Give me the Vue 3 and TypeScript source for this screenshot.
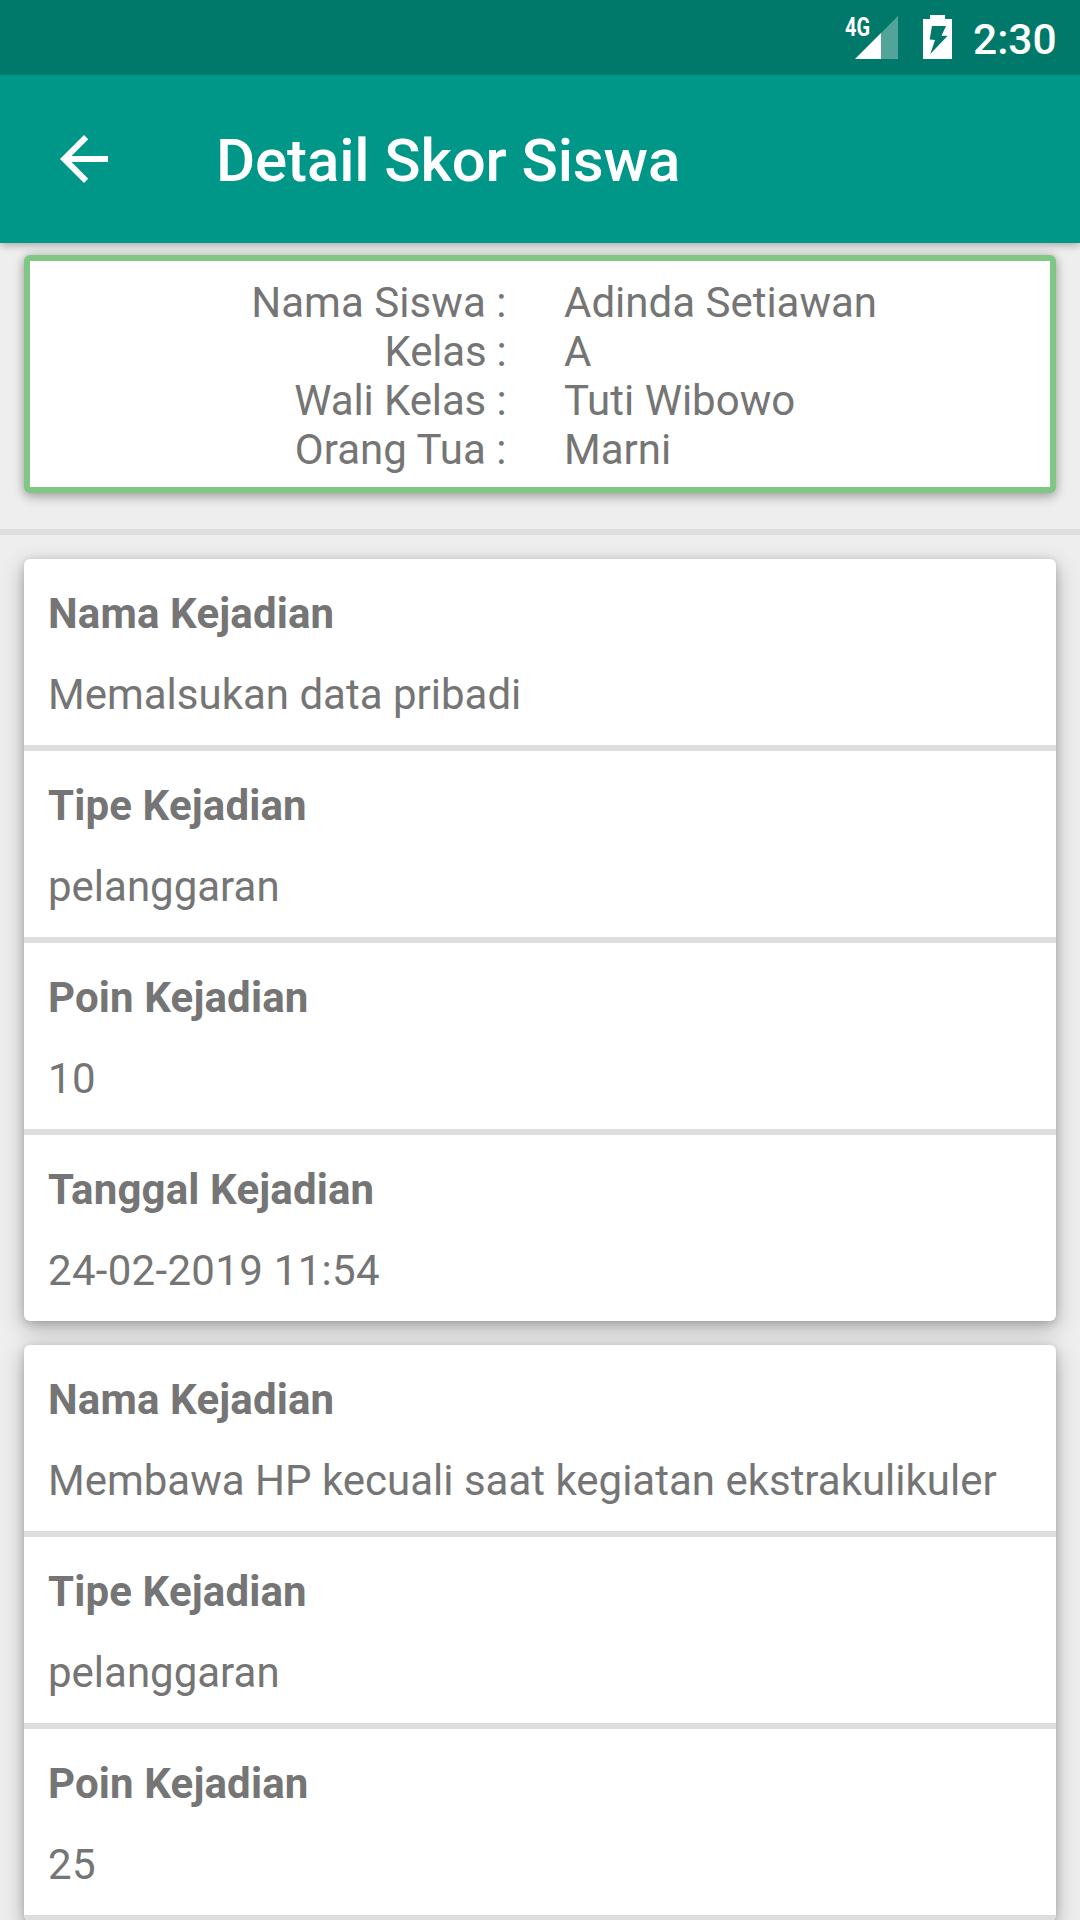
<script setup lang="ts">
interface Field {
  label: string
  value: string
  numeric?: boolean
}

const student: Field[] = [
  { label: 'Nama Siswa :', value: 'Adinda Setiawan' },
  { label: 'Kelas :', value: 'A' },
  { label: 'Wali Kelas :', value: 'Tuti Wibowo' },
  { label: 'Orang Tua :', value: 'Marni' },
]

const incidents: Field[][] = [
  [
    { label: 'Nama Kejadian', value: 'Memalsukan data pribadi' },
    { label: 'Tipe Kejadian', value: 'pelanggaran' },
    { label: 'Poin Kejadian', value: '10', numeric: true },
    { label: 'Tanggal Kejadian', value: '24-02-2019 11:54', numeric: true },
  ],
  [
    { label: 'Nama Kejadian', value: 'Membawa HP kecuali saat kegiatan ekstrakulikuler' },
    { label: 'Tipe Kejadian', value: 'pelanggaran' },
    { label: 'Poin Kejadian', value: '25', numeric: true },
  ],
]
</script>

<template>
  <div class="screen">
    <header class="status-bar">
      <svg class="signal" width="56" height="48" viewBox="0 0 56 48">
        <text x="2" y="23.5" class="network" textLength="25" lengthAdjust="spacingAndGlyphs">4G</text>
        <path d="M55 4V47H38V21Z" fill="#fff" fill-opacity=".32" />
        <path d="M12 47L38 21V47Z" fill="#fff" />
      </svg>
      <svg class="battery" width="29" height="44" viewBox="0 0 29 44">
        <path
          fill="#fff"
          fill-rule="evenodd"
          d="M7 0H22V4H29V44H0V4H7ZM9 11L6.7 24.5L12 25L7.3 39L24.7 20.7H18.5L23 11Z"
        />
      </svg>
      <span class="clock">2:30</span>
    </header>

    <nav class="app-bar">
      <svg class="back" width="72" height="72" viewBox="0 0 24 24">
        <path fill="#fff" d="M20 11H7.83l5.59-5.59L12 4l-8 8 8 8 1.41-1.41L7.83 13H20v-2z" />
      </svg>
      <h1 class="title">Detail Skor Siswa</h1>
    </nav>

    <main class="content">
      <section class="card student">
        <div v-for="row in student" :key="row.label" class="student-row">
          <span class="student-label">{{ row.label }}</span>
          <span>{{ row.value }}</span>
        </div>
      </section>

      <hr class="divider" />

      <section v-for="(incident, i) in incidents" :key="i" class="card incident" :class="{ open: incident.length < 4 }">
        <div v-for="field in incident" :key="field.label" class="field">
          <div class="field-label">{{ field.label }}</div>
          <div class="field-value" :class="{ numeric: field.numeric }">{{ field.value }}</div>
        </div>
      </section>
    </main>
  </div>
</template>

<style>
body {
  margin: 0;
  background: #eee;
}
</style>

<style scoped>
.screen {
  display: flex;
  flex-direction: column;
  width: 1080px;
  height: 1920px;
  overflow: hidden;
  background: #eee;
  color: #757575;
  font-family: Roboto, sans-serif;
  font-size: 42px;
  line-height: 49px;
}

.status-bar {
  position: relative;
  z-index: 2;
  flex: none;
  display: flex;
  align-items: flex-start;
  box-sizing: border-box;
  height: 75px;
  padding-left: 843px;
  background: #00796b;
  color: #fff;
}

.signal {
  flex: none;
  margin-top: 12px;
}

.network {
  fill: #fff;
  font: 700 25px Roboto, sans-serif;
}

.battery {
  flex: none;
  margin: 15px 0 0 24px;
}

.clock {
  margin: 15px 0 0 21px;
  font-size: 42.5px;
  font-weight: 500;
}

.app-bar {
  position: relative;
  z-index: 1;
  flex: none;
  display: flex;
  align-items: center;
  box-sizing: border-box;
  height: 168px;
  padding-left: 48px;
  background: #009688;
  color: #fff;
  box-shadow: 0 2px 8px rgba(0, 0, 0, 0.3);
}

.back {
  flex: none;
}

.title {
  margin: 3px 0 0 96px;
  font-size: 60px;
  font-weight: 500;
  line-height: 70px;
  letter-spacing: -0.12px;
}

.content {
  flex: none;
  padding: 12px 24px 0;
}

.card {
  box-sizing: border-box;
  border-radius: 6px;
  background: #fff;
}

.student {
  height: 238px;
  padding-top: 17px;
  border: 6px solid #81c784;
  box-shadow:
    0 5px 12px rgba(0, 0, 0, 0.22),
    0 0 10px rgba(0, 0, 0, 0.2);
}

.student-row {
  display: grid;
  grid-template-columns: 476.5px 1fr;
  column-gap: 57.5px;
}

.student-label {
  text-align: right;
  letter-spacing: 0.05px;
}

.student-row:nth-child(2) .student-label {
  letter-spacing: -0.22px;
}

.student-row:nth-child(3) .student-label {
  letter-spacing: -0.13px;
}

.divider {
  height: 6px;
  margin: 36px -24px 24px;
  border: 0;
  background: #dedede;
}

.incident {
  margin-bottom: 24px;
  overflow: hidden;
  box-shadow:
    0 7px 22px rgba(0, 0, 0, 0.28),
    0 2px 8px rgba(0, 0, 0, 0.16);
}

.field {
  box-sizing: border-box;
  height: 192px;
  padding: 30px 24px 0;
  border-bottom: 6px solid #dedede;
}

.incident:not(.open) .field:last-child {
  height: 186px;
  border-bottom: 0;
}

.field-label {
  margin-bottom: 32px;
  font-weight: 700;
  letter-spacing: 0.14px;
}

.field-value {
  white-space: nowrap;
}

.numeric {
  letter-spacing: 0.3px;
}
</style>
